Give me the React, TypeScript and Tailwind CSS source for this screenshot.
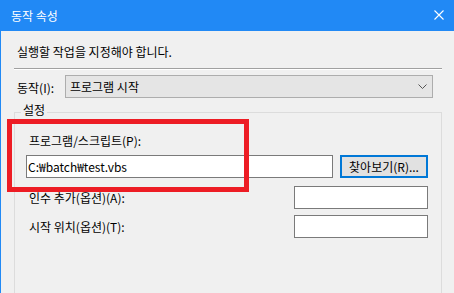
export default function App() {
  return (
    <div className="relative h-[293px] w-[454px] overflow-hidden bg-[#f0f0f0] font-['Noto_Sans_CJK_KR','Malgun_Gothic',sans-serif] text-[12px] leading-[16px] text-black">
      {/* title bar */}
      <div className="flex h-[31px] items-center justify-between bg-[#2189f5] pl-[11px] pr-[10px] text-white">
        <span className="pt-[1px]">동작 속성</span>
        <svg width="10" height="10" viewBox="0 0 10 10" className="mt-[-1px]">
          <path d="M0.5 0.5 L9.5 9.5 M9.5 0.5 L0.5 9.5" stroke="#fff" strokeWidth="1.1" />
        </svg>
      </div>

      <div className="h-[262px] border-l border-[#2189f5] pl-[13px] pr-[12px]">
        <p className="pl-[3px] pt-[13px]">실행할 작업을 지정해야 합니다.</p>
        <div className="mt-[8px] h-[2px] border-t border-b border-t-[#a0a0a0] border-b-white" />

        <div className="mt-[5px] flex h-[23px] items-center">
          <span className="w-[51px] pl-[3px] pt-[2px]">동작(I):</span>
          <div className="flex h-[23px] w-[368px] items-center justify-between border border-[#adadad] bg-[#e5e5e5] pl-[4px] pr-[5px]">
            <span>프로그램 시작</span>
            <svg width="9" height="5" viewBox="0 0 9 5">
              <path d="M0.5 0.5 L4.5 4.5 L8.5 0.5" fill="none" stroke="#555" strokeWidth="1" />
            </svg>
          </div>
        </div>

        {/* 설정 group */}
        <div className="relative mt-[14px] h-[200px] border border-[#dcdcdc] pl-[11px]">
          <span className="absolute left-[6px] top-[-11px] bg-[#f0f0f0] px-[2px]">설정</span>
          <p className="pl-[3px] pt-[20px]">프로그램/스크립트(P):</p>
          <div className="mt-[6px] flex gap-[7px]">
            <div className="flex h-[23px] w-[307px] items-center border border-[#7a7a7a] bg-white pl-[1px]">
              C:₩batch₩test.vbs
            </div>
            <button className="h-[23px] w-[88px] border-2 border-[#0078d7] bg-[#e1e1e1] text-center">
              찾아보기(R)...
            </button>
          </div>
          <div className="mt-[8px] flex items-center justify-between pr-[13px]">
            <span className="pl-[3px]">인수 추가(옵션)(A):</span>
            <div className="h-[23px] w-[134px] border border-[#7a7a7a] bg-white" />
          </div>
          <div className="mt-[6px] flex items-center justify-between pr-[13px]">
            <span className="pl-[3px]">시작 위치(옵션)(T):</span>
            <div className="h-[23px] w-[134px] border border-[#7a7a7a] bg-white" />
          </div>
        </div>
      </div>

      {/* red annotation */}
      <div className="absolute left-[7px] top-[119px] h-[73px] w-[242px] border-[5px] border-[#ed1c24]" />
    </div>
  );
}
